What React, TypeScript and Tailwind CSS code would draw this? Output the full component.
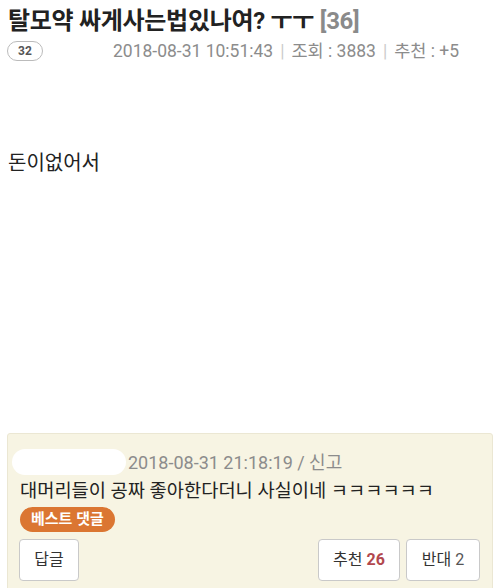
import React from "react";

const font = { fontFamily: 'Roboto, "Noto Sans CJK KR", sans-serif' };

export default function App() {
  return (
    <div className="w-[500px] h-[588px] overflow-hidden bg-white relative" style={font}>
      <div className="pl-[8px] pt-[5px]">
        <div className="text-[24px] leading-[32px] font-bold text-[#222] tracking-[-0.3px] whitespace-nowrap">
          탈모약 싸게사는법있나여? ㅜㅜ <span className="text-[#8a8a8a]">[36]</span>
        </div>
        <div className="flex items-center mt-[2px] h-[24px]">
          <div className="w-[36px] h-[20px] border border-[#bbb] rounded-full flex items-center justify-center text-[12px] font-bold text-[#555] -ml-[1px]">
            32
          </div>
          <div className="ml-[70px] text-[17.5px] text-[#8c8c8c] flex items-center whitespace-nowrap">
            <span>2018-08-31 10:51:43</span>
            <span className="mx-[7px] text-[#ccc]">|</span>
            <span>조회 : 3883</span>
            <span className="mx-[7px] text-[#ccc]">|</span>
            <span>추천 : +5</span>
          </div>
        </div>
      </div>

      <div className="pl-[8px] mt-[86px] text-[20px] leading-[28px] text-[#222]">돈이없어서</div>

      <div className="absolute left-[7px] top-[433px] w-[486px] h-[170px] bg-[#f7f4e3] border border-[#ebe7d3] rounded-[3px]">
        <div className="flex items-center mt-[15px] h-[26px]">
          <div className="ml-[4px] w-[114px] h-[26px] bg-white rounded-full" />
          <span className="ml-[2px] text-[18px] text-[#8c8c8c] whitespace-nowrap">2018-08-31 21:18:19 / 신고</span>
        </div>
        <div className="ml-[12px] mt-[2px] text-[18.7px] leading-[28px] text-[#222] whitespace-nowrap">
          대머리들이 공짜 좋아한다더니 사실이네 ㅋㅋㅋㅋㅋㅋ
        </div>
        <div className="ml-[12px] mt-[2px] inline-flex items-center h-[25px] px-[11px] rounded-full bg-[#db7632] text-white text-[15px] font-bold">
          베스트 댓글
        </div>
        <div className="flex mt-[7px] px-[11px]">
          <div className="w-[60px] h-[42px] bg-white border border-[#c9c9c9] rounded-[4px] flex items-center justify-center text-[16px] text-[#333]">
            답글
          </div>
          <div className="ml-auto w-[82px] h-[42px] bg-white border border-[#c9c9c9] rounded-[4px] flex items-center justify-center text-[16px] text-[#333]">
            추천&nbsp;<span className="font-bold text-[#b2484e]">26</span>
          </div>
          <div className="ml-[6px] mr-[1px] w-[74px] h-[42px] bg-white border border-[#c9c9c9] rounded-[4px] flex items-center justify-center text-[16px] text-[#333]">
            반대 <span className="ml-[4px] text-[#555]">2</span>
          </div>
        </div>
      </div>
    </div>
  );
}
